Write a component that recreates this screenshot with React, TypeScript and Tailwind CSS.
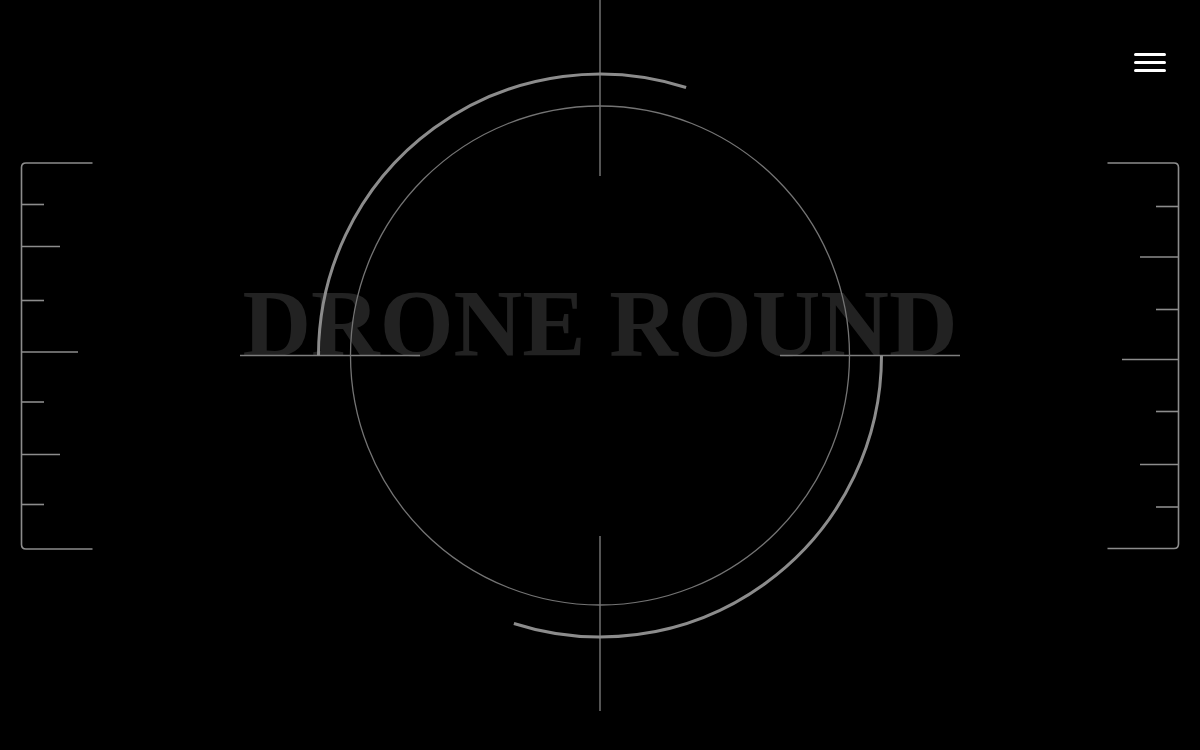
import React from 'react';

const leftTicks = [
  { y: 204.5, len: 44 },
  { y: 246.5, len: 60 },
  { y: 300.5, len: 44 },
  { y: 352, len: 78 },
  { y: 402, len: 44 },
  { y: 454.5, len: 60 },
  { y: 504.5, len: 44 },
];

const rightTicks = [
  { y: 206.5, from: 1156 },
  { y: 257, from: 1140 },
  { y: 309.5, from: 1156 },
  { y: 359.5, from: 1122 },
  { y: 411.5, from: 1156 },
  { y: 464.5, from: 1140 },
  { y: 507, from: 1156 },
];

function Reticle() {
  return (
    <svg
      className="absolute inset-0"
      width="1200"
      height="750"
      viewBox="0 0 1200 750"
      fill="none"
    >
      {/* crosshair */}
      <line x1="600" y1="0" x2="600" y2="176" stroke="#828282" strokeWidth="1.3" />
      <line x1="600" y1="536" x2="600" y2="711" stroke="#828282" strokeWidth="1.3" />
      <line x1="240" y1="355.5" x2="420" y2="355.5" stroke="#7e7e7e" strokeWidth="1.5" />
      <line x1="780" y1="355.5" x2="960" y2="355.5" stroke="#7e7e7e" strokeWidth="1.5" />

      {/* inner ring */}
      <circle cx="600" cy="355.5" r="249.5" stroke="#747474" strokeWidth="1.3" />

      {/* outer arcs */}
      <path
        d="M318.5 355.5 A281.5 281.5 0 0 1 686.1 87.5"
        stroke="#8c8c8c"
        strokeWidth="3"
      />
      <path
        d="M881.5 355.5 A281.5 281.5 0 0 1 513.9 623.5"
        stroke="#8c8c8c"
        strokeWidth="3"
      />

      {/* left scale */}
      <path
        d="M92.5 163 H26 Q21.5 163 21.5 167.5 V544.5 Q21.5 549 26 549 H92.5"
        stroke="#8c8c8c"
        strokeWidth="1.6"
      />
      {leftTicks.map((t) => (
        <line key={t.y} x1="21.5" y1={t.y} x2={t.len} y2={t.y} stroke="#8c8c8c" strokeWidth="1.6" />
      ))}

      {/* right scale */}
      <path
        d="M1107.5 163 H1174 Q1178.5 163 1178.5 167.5 V544 Q1178.5 548.5 1174 548.5 H1107.5"
        stroke="#8c8c8c"
        strokeWidth="1.6"
      />
      {rightTicks.map((t) => (
        <line key={t.y} x1={t.from} y1={t.y} x2="1178.5" y2={t.y} stroke="#8c8c8c" strokeWidth="1.6" />
      ))}
    </svg>
  );
}

export default function App() {
  return (
    <div className="relative h-[750px] w-full overflow-hidden bg-black">
      <h1 className="absolute left-0 right-0 top-[277px] text-center font-['Liberation_Serif',serif] text-[95px] font-bold leading-none text-[#222222]">
        DRONE ROUND
      </h1>

      <Reticle />

      <button className="absolute right-[34px] top-[53px] flex flex-col gap-[5px]" aria-label="Menu">
        <span className="block h-[3px] w-8 rounded-full bg-white" />
        <span className="block h-[3px] w-8 rounded-full bg-white" />
        <span className="block h-[3px] w-8 rounded-full bg-white" />
      </button>
    </div>
  );
}
